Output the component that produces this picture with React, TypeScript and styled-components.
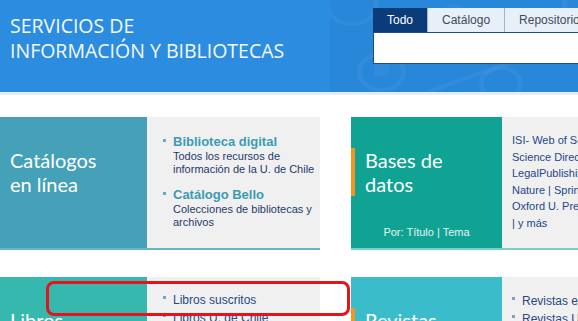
import { FC } from "react";
import styled, { createGlobalStyle } from "styled-components";

const GlobalStyle = createGlobalStyle`
  html, body {
    margin: 0;
    padding: 0;
    background: #ffffff;
    overflow: hidden;
  }
  body {
    font-family: "Liberation Sans", Arial, sans-serif;
  }
  * {
    box-sizing: border-box;
  }
`;

const Page = styled.div`
  width: 578px;
  height: 321px;
  overflow: hidden;
`;

const Header = styled.header`
  display: flex;
  height: 95px;
  background: #2c8ce0;
  border-bottom: 3px solid #e3eef9;
`;

const Brand = styled.h1`
  flex: 0 0 330px;
  margin: 0;
  padding: 13px 0 0 10px;
  font-family: "Open Sans", sans-serif;
  font-weight: 400;
  font-size: 19.5px;
  line-height: 25px;
  color: #f4f9fe;
  white-space: nowrap;
`;

const SearchArea = styled.div`
  position: relative;
  flex: 1;
  padding: 8px 0 0 43px;
  background: #2987da;
`;

const Pattern = styled.svg`
  position: absolute;
  inset: 0;
  width: 100%;
  height: 100%;
`;

const SearchBox = styled.div`
  position: relative;
  width: 260px;
`;

const Tabs = styled.div`
  display: flex;
  height: 24px;
`;

const Tab = styled.div<{ $active?: boolean }>`
  display: flex;
  align-items: center;
  padding: 0 14px;
  font-size: 12px;
  white-space: nowrap;
  background: ${(p) => (p.$active ? "#0b3c7a" : "#e7eff8")};
  color: ${(p) => (p.$active ? "#ffffff" : "#3d4b5c")};
  border-right: 1px solid #9fb6cf;
`;

const SearchField = styled.div`
  height: 32px;
  background: #ffffff;
  border: 1px solid #1b4f8c;
  border-right: none;
`;

const Grid = styled.main`
  display: grid;
  grid-template-columns: 324px 324px;
  column-gap: 31px;
  row-gap: 27px;
  margin: 22px 0 0 -4px;
`;

const Card = styled.section<{ $line: string }>`
  display: grid;
  grid-template-columns: 151px 1fr;
  height: 133px;
  border-bottom: 2px solid ${(p) => p.$line};
`;

const Tile = styled.div<{ $bg: string }>`
  display: flex;
  flex-direction: column;
  background: ${(p) => p.$bg};
  padding-top: 31px;
`;

const TileTitle = styled.h2<{ $accent?: boolean }>`
  margin: 0;
  font-family: Lato, "Open Sans", sans-serif;
  font-weight: 400;
  font-size: 20px;
  line-height: 24px;
  color: #ffffff;
  padding-left: ${(p) => (p.$accent ? "10px" : "14px")};
  border-left: ${(p) => (p.$accent ? "4px solid #f7931e" : "none")};
`;

const TileFooter = styled.div`
  margin-top: auto;
  padding-bottom: 10px;
  text-align: center;
  font-size: 11px;
  line-height: 12px;
  color: #e3f5f1;
`;

const Panel = styled.div<{ $inset: number; $top: number }>`
  background: #f0f0f0;
  padding: ${(p) => p.$top}px 0 0 ${(p) => p.$inset}px;
  white-space: nowrap;
  overflow: hidden;
`;

const Item = styled.div`
  position: relative;
  padding-left: 10px;
  & + & {
    margin-top: 12px;
  }
`;

const Bullet = styled.span<{ $color: string }>`
  position: absolute;
  left: 0;
  top: 5px;
  width: 3px;
  height: 3px;
  background: ${(p) => p.$color};
`;

const ItemTitle = styled.div`
  font-size: 13px;
  font-weight: 700;
  line-height: 15px;
  color: #3a9cb3;
  margin-bottom: 1px;
`;

const ItemDesc = styled.div`
  font-size: 11px;
  line-height: 12.5px;
  color: #1f3a6c;
`;

const LinkLine = styled.div`
  font-size: 11px;
  line-height: 16.5px;
  color: #24478a;
`;

const SimpleItem = styled.div`
  position: relative;
  padding-left: 10px;
  font-size: 12px;
  line-height: 18px;
  color: #2a4884;
`;

const Highlight = styled.div`
  position: absolute;
  left: 46px;
  top: 281px;
  width: 304px;
  height: 35px;
  border: 3px solid #e3141c;
  border-radius: 8px;
  pointer-events: none;
`;

const Tag: FC<{ color: string }> = ({ color }) => <Bullet $color={color} />;

const App: FC = () => {
  return (
    <Page>
      <GlobalStyle />
      <Header>
        <Brand>
          SERVICIOS DE
          <br />
          INFORMACIÓN Y BIBLIOTECAS
        </Brand>
        <SearchArea>
          <Pattern viewBox="0 0 248 92" preserveAspectRatio="none">
            <g fill="none" stroke="#ffffff" strokeOpacity="0.045" strokeWidth="4">
              <circle cx="18" cy="4" r="20" />
              <circle cx="42" cy="72" r="18" />
              <circle cx="216" cy="6" r="24" />
              <circle cx="140" cy="84" r="16" />
              <path d="M80 92 L190 44" />
            </g>
            <g fill="#ffffff" fillOpacity="0.04">
              <rect x="36" y="64" width="12" height="12" rx="2" />
              <circle cx="102" cy="14" r="10" />
            </g>
          </Pattern>
          <SearchBox>
            <Tabs>
              <Tab $active>Todo</Tab>
              <Tab>Catálogo</Tab>
              <Tab>Repositorio</Tab>
            </Tabs>
            <SearchField />
          </SearchBox>
        </SearchArea>
      </Header>

      <Grid>
        <Card $line="#62b6c8">
          <Tile $bg="#45a1b7">
            <TileTitle>
              Catálogos
              <br />
              en línea
            </TileTitle>
          </Tile>
          <Panel $inset={16} $top={17}>
            <Item>
              <Tag color="#5eaec3" />
              <ItemTitle>Biblioteca digital</ItemTitle>
              <ItemDesc>
                Todos los recursos de
                <br />
                información de la U. de Chile
              </ItemDesc>
            </Item>
            <Item>
              <Tag color="#5eaec3" />
              <ItemTitle>Catálogo Bello</ItemTitle>
              <ItemDesc>
                Colecciones de bibliotecas y
                <br />
                archivos
              </ItemDesc>
            </Item>
          </Panel>
        </Card>

        <Card $line="#78cfc4">
          <Tile $bg="#10a394">
            <TileTitle $accent>
              Bases de
              <br />
              datos
            </TileTitle>
            <TileFooter>Por: Título | Tema</TileFooter>
          </Tile>
          <Panel $inset={10} $top={15}>
            <LinkLine>ISI- Web of Science</LinkLine>
            <LinkLine>Science Direct | Scopus</LinkLine>
            <LinkLine>LegalPublishing</LinkLine>
            <LinkLine>Nature | Springer</LinkLine>
            <LinkLine>Oxford U. Press</LinkLine>
            <LinkLine>| y más</LinkLine>
          </Panel>
        </Card>

        <Card $line="#7fd0c9">
          <Tile $bg="#37b8af">
            <TileTitle>
              Libros
              <br />
              electrónicos
            </TileTitle>
          </Tile>
          <Panel $inset={16} $top={14}>
            <SimpleItem>
              <Tag color="#7f9fc2" />
              Libros suscritos
            </SimpleItem>
            <SimpleItem>
              <Tag color="#7f9fc2" />
              Libros U. de Chile
            </SimpleItem>
          </Panel>
        </Card>

        <Card $line="#7fd3dc">
          <Tile $bg="#3bbccb">
            <TileTitle $accent>
              Revistas
              <br />
              electrónicas
            </TileTitle>
          </Tile>
          <Panel $inset={10} $top={15}>
            <SimpleItem>
              <Tag color="#7f9fc2" />
              Revistas electrónicas
            </SimpleItem>
            <SimpleItem>
              <Tag color="#7f9fc2" />
              Revistas U. de Chile
            </SimpleItem>
          </Panel>
        </Card>
      </Grid>
      <Highlight />
    </Page>
  );
};

export default App;
